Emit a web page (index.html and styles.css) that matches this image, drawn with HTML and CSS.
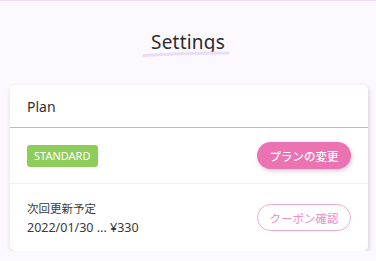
FILE: index.html
```html
<!DOCTYPE html>
<html lang="ja">
<head>
<meta charset="utf-8">
<link rel="stylesheet" href="styles.css">
</head>
<body>
<div class="topline"></div>
<header class="title-wrap">
  <h1 class="title">Settings</h1>
  <svg class="title-underline" width="88" height="8" viewBox="0 0 88 8"><path d="M2 5.5 Q 40 3 86 3" stroke="#ebdcf5" stroke-width="3" fill="none" stroke-linecap="round"/></svg>
</header>
<section class="card">
  <div class="card-head">Plan</div>
  <div class="row row-plan">
    <span class="badge">STANDARD</span>
    <button class="btn btn-fill">プランの変更</button>
  </div>
  <div class="row row-next">
    <div class="next-text">
      <div class="next-label">次回更新予定</div>
      <div class="next-date">2022/01/30 ... ¥330</div>
    </div>
    <button class="btn btn-outline">クーポン確認</button>
  </div>
</section>
</body>
</html>
```
FILE: styles.css
```css
html, body {
  margin: 0;
  padding: 0;
  background: #fbf9fd;
  font-family: "Noto Sans", "Noto Sans CJK JP", sans-serif;
  color: #333;
}
.topline {
  height: 1px;
  background: #f0dcf6;
}
.title-wrap {
  display: flex;
  flex-direction: column;
  align-items: center;
  padding-top: 29px;
  height: 55px;
}
.title {
  margin: 0;
  font-family: "Noto Sans", sans-serif;
  font-weight: 400;
  font-size: 19px;
  line-height: 24px;
  color: #2e2a30;
  letter-spacing: 0.2px;
}
.title-underline {
  margin-top: -4px;
  margin-left: -4px;
}
.card {
  margin: 0 8px 0 10px;
  background: #fff;
  border-radius: 5px;
  box-shadow: 1px 2px 5px rgba(80, 60, 100, 0.22);
}
.card-head {
  height: 42px;
  padding: 0 17px;
  display: flex;
  align-items: center;
  font-size: 14px;
  color: #2f2f2f;
  border-bottom: 1px solid #d9a2ea;
}
.row {
  display: flex;
  align-items: center;
  justify-content: space-between;
  padding: 0 17px;
}
.row-plan {
  height: 55px;
  border-bottom: 1px solid #f1f1f1;
}
.row-next {
  height: 67px;
}
.badge {
  background: #8fcd5a;
  color: #fff;
  font-size: 11px;
  height: 22px;
  line-height: 22px;
  padding: 0 7px;
  border-radius: 3px;
}
.btn {
  width: 94px;
  height: 27px;
  border-radius: 14px;
  font-family: "Noto Sans CJK JP", sans-serif;
  font-size: 11.5px;
  padding: 0;
  display: flex;
  align-items: center;
  justify-content: center;
}
.btn-fill {
  background: #ec73b1;
  color: #fff;
  border: none;
  font-weight: 500;
  box-shadow: 1px 2px 4px rgba(120, 60, 100, 0.25);
}
.btn-outline {
  background: #fff;
  color: #f08ec2;
  border: 1px solid #f4a8cd;
}
.next-text {
  color: #3a3a3a;
  line-height: 19px;
}
.next-label {
  font-family: "Noto Sans CJK JP", sans-serif;
  font-size: 11.5px;
}
.next-date {
  font-family: "Noto Sans", sans-serif;
  font-size: 12.5px;
}
```
